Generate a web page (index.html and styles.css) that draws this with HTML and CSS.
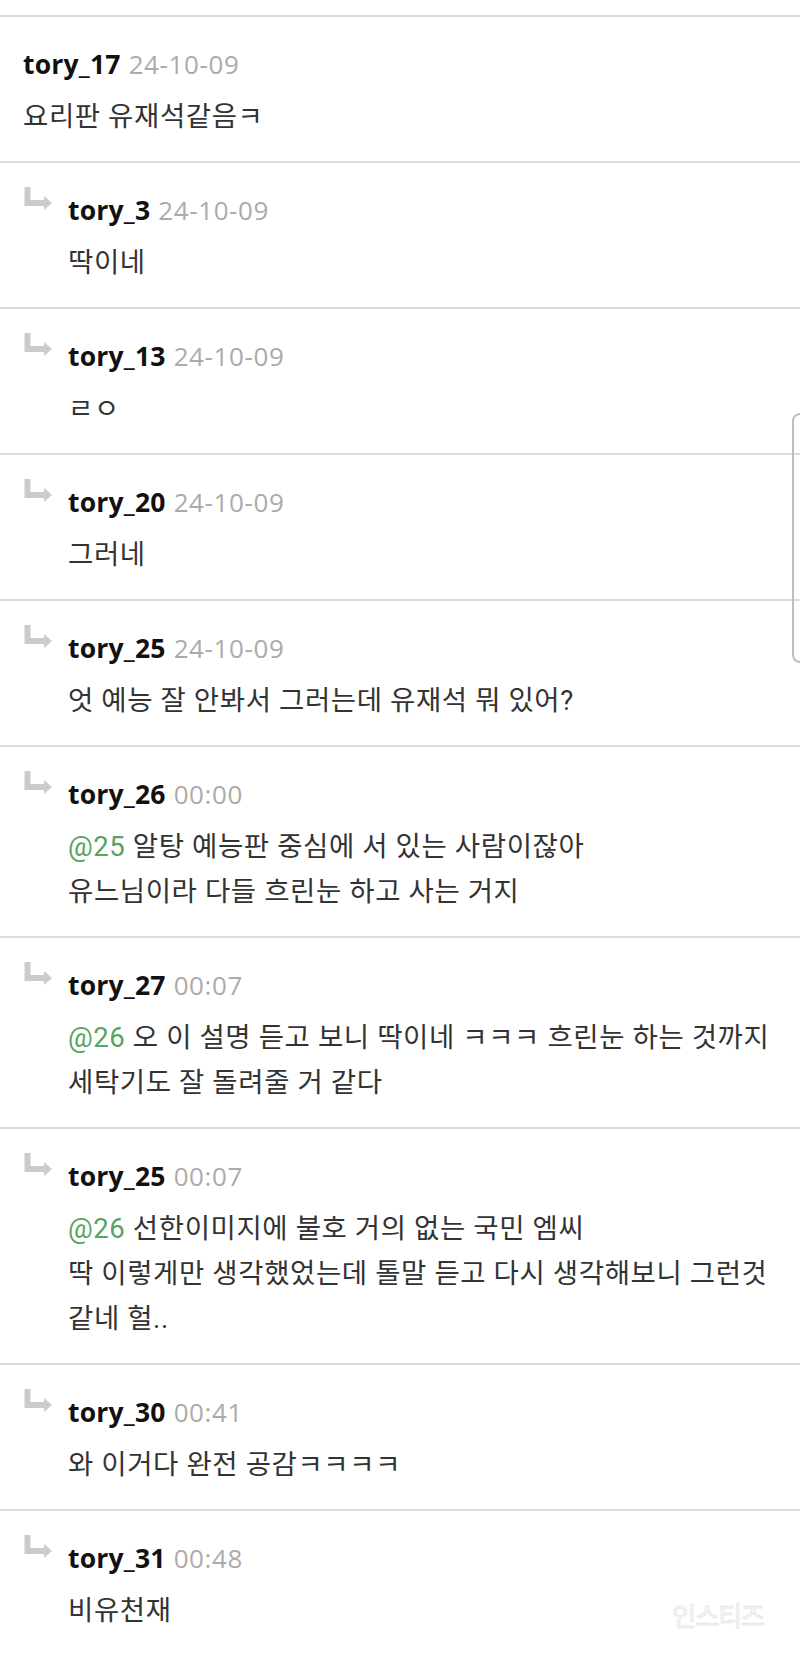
FILE: index.html
```html
<!DOCTYPE html>
<html lang="ko">
<head>
    <meta charset="UTF-8">
    <meta name="viewport" content="width=device-width, initial-scale=1.0">
    <title>comments</title>
    <link rel="stylesheet" href="styles.css">
</head>
<body>
    <div class="topSpace"></div>
    <div class="commentList">

        <div class="comment">
            <div class="content">
                <div class="head"><span class="name">tory_17</span><span class="date">24-10-09</span></div>
                <p class="text">요리판 유재석같음ㅋ</p>
            </div>
        </div>

        <div class="comment reply">
            <svg class="arrow" viewBox="0 0 30 30" width="30" height="30"><path d="M4.5 1 V17 H22" /><polygon points="21,10 29,17 21,24" /></svg>
            <div class="content">
                <div class="head"><span class="name">tory_3</span><span class="date">24-10-09</span></div>
                <p class="text">딱이네</p>
            </div>
        </div>

        <div class="comment reply">
            <svg class="arrow" viewBox="0 0 30 30" width="30" height="30"><path d="M4.5 1 V17 H22" /><polygon points="21,10 29,17 21,24" /></svg>
            <div class="content">
                <div class="head"><span class="name">tory_13</span><span class="date">24-10-09</span></div>
                <p class="text">ㄹㅇ</p>
            </div>
        </div>

        <div class="comment reply">
            <svg class="arrow" viewBox="0 0 30 30" width="30" height="30"><path d="M4.5 1 V17 H22" /><polygon points="21,10 29,17 21,24" /></svg>
            <div class="content">
                <div class="head"><span class="name">tory_20</span><span class="date">24-10-09</span></div>
                <p class="text">그러네</p>
            </div>
        </div>

        <div class="comment reply">
            <svg class="arrow" viewBox="0 0 30 30" width="30" height="30"><path d="M4.5 1 V17 H22" /><polygon points="21,10 29,17 21,24" /></svg>
            <div class="content">
                <div class="head"><span class="name">tory_25</span><span class="date">24-10-09</span></div>
                <p class="text">엇 예능 잘 안봐서 그러는데 유재석 뭐 있어?</p>
            </div>
        </div>

        <div class="comment reply">
            <svg class="arrow" viewBox="0 0 30 30" width="30" height="30"><path d="M4.5 1 V17 H22" /><polygon points="21,10 29,17 21,24" /></svg>
            <div class="content">
                <div class="head"><span class="name">tory_26</span><span class="date">00:00</span></div>
                <p class="text"><span class="mention">@25</span> 알탕 예능판 중심에 서 있는 사람이잖아<br>유느님이라 다들 흐린눈 하고 사는 거지</p>
            </div>
        </div>

        <div class="comment reply">
            <svg class="arrow" viewBox="0 0 30 30" width="30" height="30"><path d="M4.5 1 V17 H22" /><polygon points="21,10 29,17 21,24" /></svg>
            <div class="content">
                <div class="head"><span class="name">tory_27</span><span class="date">00:07</span></div>
                <p class="text"><span class="mention">@26</span> 오 이 설명 듣고 보니 딱이네 ㅋㅋㅋ 흐린눈 하는 것까지<br>세탁기도 잘 돌려줄 거 같다</p>
            </div>
        </div>

        <div class="comment reply">
            <svg class="arrow" viewBox="0 0 30 30" width="30" height="30"><path d="M4.5 1 V17 H22" /><polygon points="21,10 29,17 21,24" /></svg>
            <div class="content">
                <div class="head"><span class="name">tory_25</span><span class="date">00:07</span></div>
                <p class="text"><span class="mention">@26</span> 선한이미지에 불호 거의 없는 국민 엠씨<br>딱 이렇게만 생각했었는데 톨말 듣고 다시 생각해보니 그런것<br>같네 헐..</p>
            </div>
        </div>

        <div class="comment reply">
            <svg class="arrow" viewBox="0 0 30 30" width="30" height="30"><path d="M4.5 1 V17 H22" /><polygon points="21,10 29,17 21,24" /></svg>
            <div class="content">
                <div class="head"><span class="name">tory_30</span><span class="date">00:41</span></div>
                <p class="text">와 이거다 완전 공감ㅋㅋㅋㅋ</p>
            </div>
        </div>

        <div class="comment reply">
            <svg class="arrow" viewBox="0 0 30 30" width="30" height="30"><path d="M4.5 1 V17 H22" /><polygon points="21,10 29,17 21,24" /></svg>
            <div class="content">
                <div class="head"><span class="name">tory_31</span><span class="date">00:48</span></div>
                <p class="text">비유천재</p>
            </div>
        </div>

    </div>

    <div class="scrollThumb"></div>
    <div class="watermark">인스티즈</div>
</body>
</html>
```

FILE: styles.css
```css
* {
    margin: 0;
    padding: 0;
    box-sizing: border-box;
}

body {
    width: 800px;
    height: 1653px;
    overflow: hidden;
    position: relative;
    background: #fff;
    font-family: Roboto, "Noto Sans CJK KR", sans-serif;
    color: #333;
}

.topSpace {
    height: 15px;
}

.comment {
    display: flex;
    align-items: flex-start;
    border-top: 2px solid #dcdcdc;
    padding: 29px 10px 22px 23px;
}

.arrow {
    flex: none;
    margin-top: -6px;
    margin-right: 15px;
}

.arrow path {
    fill: none;
    stroke: #cbcbcb;
    stroke-width: 6;
}

.arrow polygon {
    fill: #cbcbcb;
}

.content {
    flex: 1;
    min-width: 0;
}

.head {
    display: flex;
    align-items: baseline;
    height: 36px;
    line-height: 36px;
}

.name {
    font-family: "Open Sans", "Noto Sans CJK KR", sans-serif;
    font-weight: 700;
    font-size: 26.5px;
    color: #111;
    letter-spacing: 0.2px;
}

.date {
    font-family: "Open Sans", sans-serif;
    font-size: 26px;
    color: #ababab;
    margin-left: 8px;
    letter-spacing: 0.6px;
}

.text {
    margin-top: 12px;
    font-size: 27.5px;
    line-height: 45px;
    letter-spacing: 0.6px;
    white-space: nowrap;
    color: #333;
}

.mention {
    color: #56a462;
}

.scrollThumb {
    position: absolute;
    top: 413px;
    right: -8px;
    width: 16px;
    height: 250px;
    border: 2px solid #bdbdbd;
    border-radius: 9px;
}

.watermark {
    position: absolute;
    right: 36px;
    bottom: 20px;
    font-family: "Noto Sans CJK KR", sans-serif;
    font-size: 26px;
    color: #fff;
    -webkit-text-stroke: 1px #e6e6e6;
    letter-spacing: -1px;
}
```
